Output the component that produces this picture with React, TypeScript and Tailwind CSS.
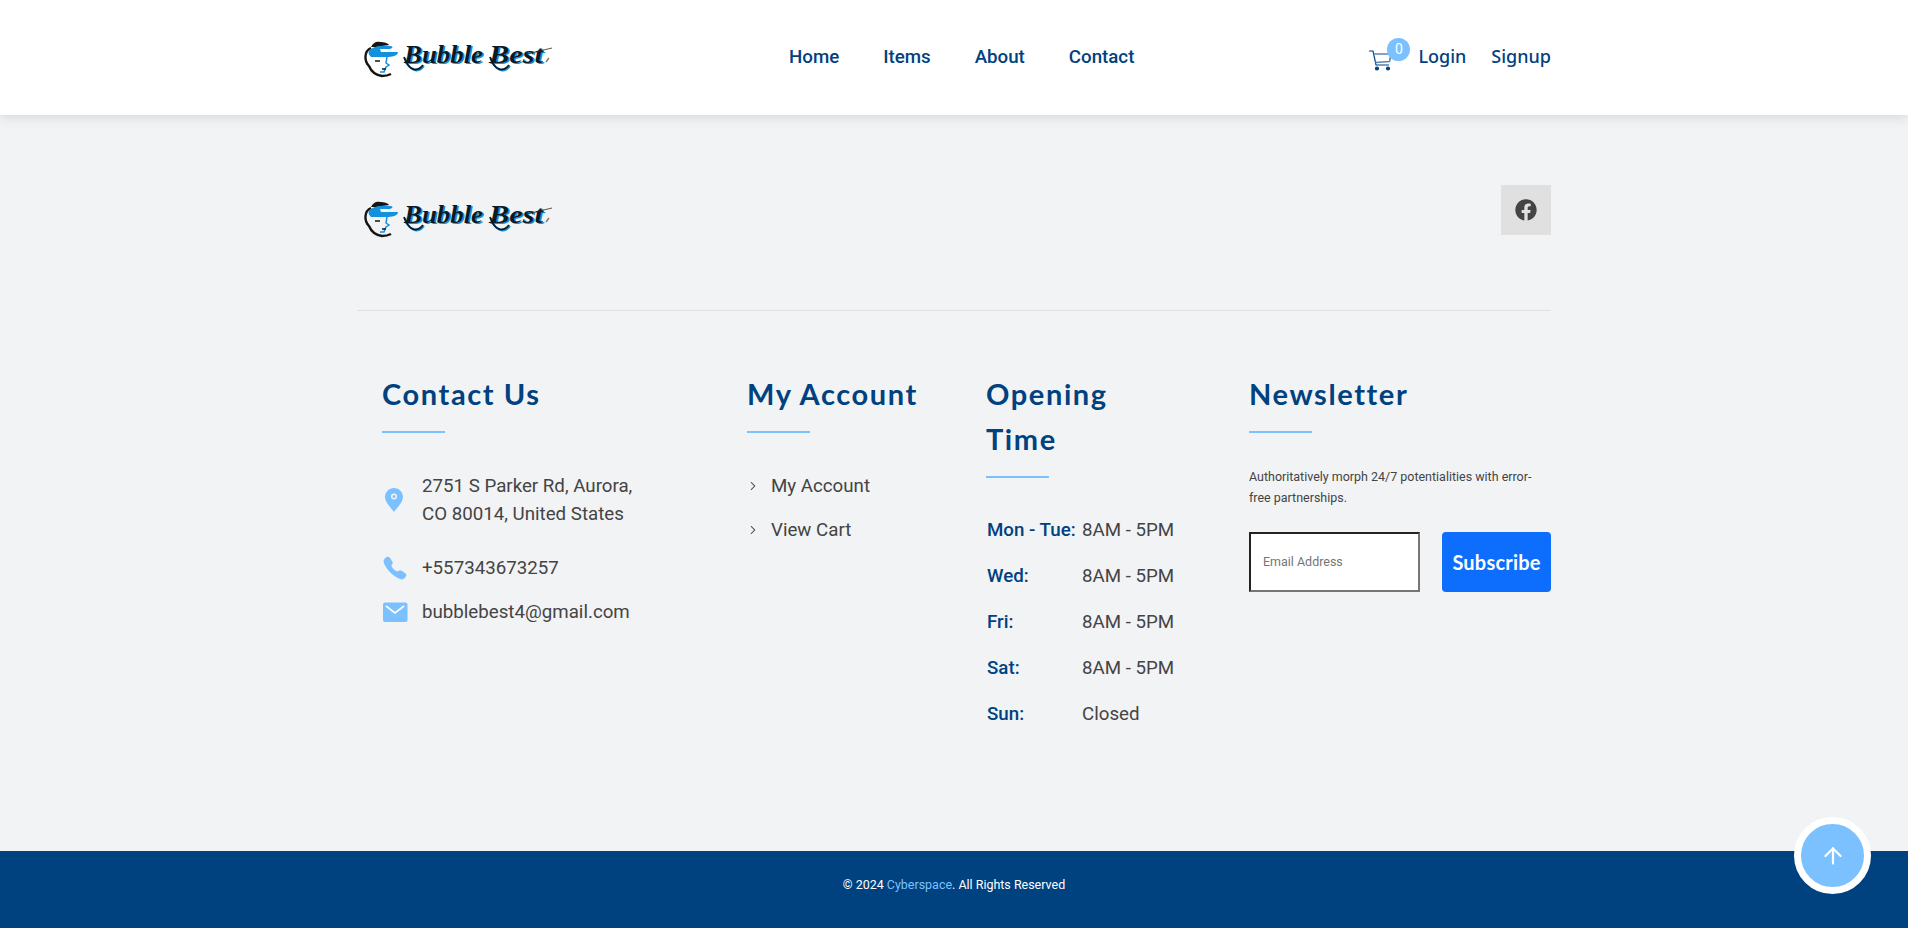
import React from "react";
import { ArrowUp, ChevronRight } from "lucide-react";
import { FaFacebook } from "react-icons/fa";
import { IoCall } from "react-icons/io5";

function Logo() {
  const word = (x: number, dx: number, fill: string, text: string, len: number) => (
    <text
      x={x + dx}
      y={25 + dx / 2}
      fontFamily="'Liberation Serif', serif"
      fontStyle="italic"
      fontWeight="700"
      fontSize="25"
      fill={fill}
      textLength={len}
      lengthAdjust="spacingAndGlyphs"
    >
      {text}
    </text>
  );
  return (
    <svg width="192" height="40" viewBox="0 0 192 40" className="block shrink-0">
      <path d="M9 10 C2 13 2 23 7 28 C9 33 13 37 20 38 C24 38 27 37 29 36" fill="none" stroke="#151515" strokeWidth="2.4" />
      <path d="M9 9 C11 5 14 3 18 4 C22 4 26 5 27 7 L14 9 Z" fill="#151515" />
      <path d="M7 13 C10 8 20 7 29 8 C32 9 30 11 26 11 L18 11 L19 14 L36 14 C36 18 30 19 24 19 L9 19 C7 17 6 15 7 13 Z" fill="#1391dd" />
      <path d="M25 19 L24 25 L27 27 L24 29 L22 34 L18 34" fill="none" stroke="#1391dd" strokeWidth="1.5" />
      <path d="M13 23 L18 23 M20 31 L24 31" stroke="#151515" strokeWidth="1.4" fill="none" />
      {word(42, 1.5, "#1391dd", "Bubble", 79)}
      {word(127, 1.5, "#1391dd", "Best", 54)}
      <path d="M43 20 C47 33 56 36 62 28" fill="none" stroke="#1391dd" strokeWidth="2" />
      <path d="M129 20 C133 33 142 36 148 28" fill="none" stroke="#1391dd" strokeWidth="2" />
      {word(42, 0, "#0b1a24", "Bubble", 79)}
      {word(127, 0, "#0b1a24", "Best", 54)}
      <path d="M42 19 C46 32 55 35 61 27" fill="none" stroke="#0b1a24" strokeWidth="1.8" />
      <path d="M128 19 C132 32 141 35 147 27" fill="none" stroke="#0b1a24" strokeWidth="1.8" />
      <path d="M165 16 L190 10" fill="none" stroke="#2a2a2a" strokeWidth="0.8" />
      <path d="M184 24 L187 20" fill="none" stroke="#8a7a66" strokeWidth="1.4" />
    </svg>
  );
}

function Heading({ children }: { children: React.ReactNode }) {
  return (
    <div className="mb-[39px]">
      <h4 className="font-['Lato',sans-serif] font-bold text-[29px] leading-[45px] tracking-[1.6px] text-[#00417f]">{children}</h4>
      <div className="mt-[15px] h-[2px] w-[63px] bg-[#7cc1ff]" />
    </div>
  );
}

const hours = [
  ["Mon - Tue:", "8AM - 5PM"],
  ["Wed:", "8AM - 5PM"],
  ["Fri:", "8AM - 5PM"],
  ["Sat:", "8AM - 5PM"],
  ["Sun:", "Closed"],
];

export default function App() {
  return (
    <div className="relative flex h-[928px] flex-col overflow-hidden bg-[#f2f3f5] font-['Roboto',sans-serif] text-[#444444]">
      <header className="relative z-10 h-[115px] shrink-0 bg-white shadow-[0_2px_12px_rgba(0,0,0,0.12)]">
        <div className="mx-auto flex h-full w-[1194px] items-center">
          <div className="pl-[5px]"><Logo /></div>
          <nav className="ml-[235px] flex gap-[44px] text-[18.72px] font-medium text-[#00417f]">
            <span>Home</span>
            <span>Items</span>
            <span>About</span>
            <span>Contact</span>
          </nav>
          <div className="relative ml-auto flex items-center font-['Noto_Sans',sans-serif] text-[18px] font-medium text-[#00417f]">
            <svg width="25" height="24" viewBox="0 0 25 24" fill="none" stroke="#00417f" strokeWidth="1.2" className="mr-[25px] ml-[1px] mt-[4px]">
              <path d="M1 3 H5 L8 17 H21" />
              <path d="M5.6 6 H23 L21.5 13.5 L7.2 14.5" stroke="#5c86b5" strokeWidth="1.6" />
              <circle cx="9" cy="20.5" r="1.5" fill="#00417f" />
              <circle cx="20" cy="20.5" r="1.5" fill="#00417f" />
            </svg>
            <span className="absolute left-[20px] top-[-6px] flex h-[23px] w-[23px] items-center justify-center rounded-full bg-[#7cc1ff] font-['Roboto',sans-serif] text-[14px] font-normal text-white">0</span>
            <span className="-mt-[3px]">Login</span>
            <span className="-mt-[3px] ml-[25px]">Signup</span>
          </div>
        </div>
      </header>

      <main className="flex-1">
        <div className="mx-auto w-[1194px]">
          <div className="flex h-[196px] items-start justify-between border-b border-[#dfe1e4] pt-[70px]">
            <div className="pl-[5px] pt-[13px]"><Logo /></div>
            <div className="flex h-[50px] w-[50px] items-center justify-center bg-[#e0e0e0] text-[#444444]">
              <FaFacebook size={22} />
            </div>
          </div>

          <div className="flex pt-[60px] text-[18.72px]">
            <div className="w-[390px] pl-[25px]">
              <Heading>Contact Us</Heading>
              <div className="flex items-center">
                <svg width="22" height="26" viewBox="0 0 22 26" className="ml-[1px] mr-[17px] shrink-0">
                  <path fillRule="evenodd" d="M11 1 C16 1 20 5 20 10 C20 15 14 21 11 25 C8 21 2 15 2 10 C2 5 6 1 11 1 Z M11 6.5 A3 3 0 1 0 11 12.5 A3 3 0 1 0 11 6.5 Z M11 8 A1.5 1.5 0 1 1 11 11 A1.5 1.5 0 1 1 11 8 Z" fill="#7cc1ff" />
                </svg>
                <p className="leading-[28px]">2751 S Parker Rd, Aurora,<br />CO 80014, United States</p>
              </div>
              <div className="mt-[26px] flex h-[28px] items-center">
                <IoCall size={26} className="mr-[14px] text-[#7cc1ff]" />
                <span>+557343673257</span>
              </div>
              <div className="mt-[16px] flex h-[28px] items-center">
                <svg width="26" height="22" viewBox="0 0 26 22" className="mr-[14px] shrink-0">
                  <rect x="1" y="1.5" width="24.5" height="19.5" rx="2" fill="#7cc1ff" />
                  <path d="M4 5 L13 12 L22 5" fill="none" stroke="#ffffff" strokeWidth="1.6" />
                </svg>
                <span>bubblebest4@gmail.com</span>
              </div>
            </div>

            <div className="w-[239px]">
              <Heading>My Account</Heading>
              <div className="flex h-[28px] items-center">
                <ChevronRight size={14} strokeWidth={1.8} className="mr-[11px] ml-[-1px] w-[14px] text-[#333333]" />
                <span>My Account</span>
              </div>
              <div className="mt-[16px] flex h-[28px] items-center">
                <ChevronRight size={14} strokeWidth={1.8} className="mr-[11px] ml-[-1px] w-[14px] text-[#333333]" />
                <span>View Cart</span>
              </div>
            </div>

            <div className="w-[263px]">
              <Heading>Opening<br />Time</Heading>
              <div className="-mt-[1px] flex flex-col gap-[18px]">
                {hours.map(([d, t]) => (
                  <div key={d} className="flex h-[28px] items-center">
                    <span className="w-[96px] shrink-0 pl-[1px] font-medium text-[#00417f]">{d}</span>
                    <span>{t}</span>
                  </div>
                ))}
              </div>
            </div>

            <div className="flex-1">
              <Heading>Newsletter</Heading>
              <p className="-mt-[6px] text-[12.48px] leading-[21px]">Authoritatively morph 24/7 potentialities with error-free partnerships.</p>
              <div className="mt-[24px] flex justify-between">
                <div className="flex h-[60px] w-[171px] items-center border-2 border-t-[#222222] border-l-[#222222] border-r-[#767676] border-b-[#767676] bg-white pl-[12px] text-[12.48px] text-[#757575]">Email Address</div>
                <div className="flex h-[60px] w-[109px] items-center justify-center rounded-[4px] bg-[#0d6efd] pb-[1px] font-['Lato',sans-serif] text-[20px] font-bold tracking-[0.2px] text-white">Subscribe</div>
              </div>
            </div>
          </div>
        </div>
      </main>

      <footer className="flex h-[77px] shrink-0 items-center justify-center bg-[#00417f] pb-[8px] text-[12.48px] text-white">
        <p>© 2024 <span className="text-[#7cc1ff]">Cyberspace</span>. All Rights Reserved</p>
      </footer>

      <div className="absolute bottom-[34px] right-[37px] flex h-[77px] w-[77px] items-center justify-center rounded-full border-[7px] border-white bg-[#7cc1ff] text-white">
        <ArrowUp size={26} strokeWidth={2} />
      </div>
    </div>
  );
}
